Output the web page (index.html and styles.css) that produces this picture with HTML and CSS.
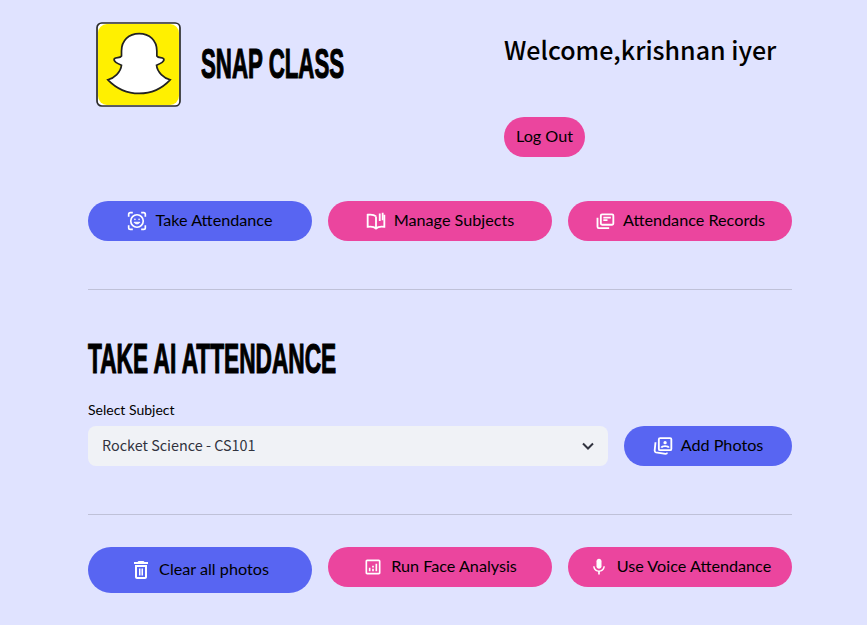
FILE: index.html
```html
<!DOCTYPE html>
<html>
  <head>
    <title>Snap Class</title>
    <link rel="stylesheet" href="styles.css">
  </head>
  <body>
    <div class="container">
      <!-- header -->
      <header class="header">
        <div class="brand">
          <svg class="logo" viewBox="0 0 250 250">
            <rect x="3" y="3" width="244" height="244" rx="14" fill="#fff" stroke="#2b2b2b" stroke-width="5"/>
            <rect x="6" y="6" width="238" height="238" rx="26" fill="#fff000"/>
            <path d="M127 34C158 34 179 55 179 85L179 100C184 108 194 102 199 108C203 116 190 122 178 127C180 148 200 165 218 170C190 200 160 210 127 210C94 210 64 200 35 170C53 165 73 148 75 127C63 122 50 116 54 108C60 102 70 108 75 100L75 85C75 55 96 34 127 34Z" fill="#fff" stroke="#222" stroke-width="5"/>
          </svg>
          <h1 class="brand-name">SNAP CLASS</h1>
        </div>
        <div class="account">
          <h2 class="welcome">Welcome,krishnan iyer</h2>
          <button class="btn pink logout"><span>Log Out</span></button>
        </div>
      </header>

      <!-- tabs -->
      <nav class="row tabs">
        <button class="btn blue">
          <svg class="icon" viewBox="0 0 24 24" fill="none" stroke="#fff" stroke-width="2">
            <path d="M2 7V4a2 2 0 0 1 2-2h3M17 2h3a2 2 0 0 1 2 2v3M22 17v3a2 2 0 0 1-2 2h-3M7 22H4a2 2 0 0 1-2-2v-3"/>
            <circle cx="12" cy="12" r="7.5"/>
            <path d="M8.5 13.5c1.5 2.6 5.500 2.600 7 0z" fill="#fff" stroke-width="1"/>
            <circle cx="9.500" cy="10" r="1" fill="#fff" stroke="none"/>
            <circle cx="14.500" cy="10" r="1" fill="#fff" stroke="none"/>
          </svg>
          <span>Take Attendance</span>
        </button>
        <button class="btn pink">
          <svg class="icon" viewBox="0 0 24 24" fill="none" stroke="#fff" stroke-width="2.200">
            <path d="M12 6.500C10 4.500 6 4 2 4.500V19c4-.5 8 0 10 2 2-2 6-2.500 10-2V4.500"/>
            <path d="M12 6.500V21"/>
            <path d="M16.500 3v9M20 2v9" />
          </svg>
          <span>Manage Subjects</span>
        </button>
        <button class="btn pink">
          <svg class="icon" viewBox="0 0 24 24" fill="none" stroke="#fff" stroke-width="2.200">
            <path d="M3 8v11c0 1 .5 1.500 1.500 1.500H17"/>
            <rect x="7" y="4" width="15" height="12.500" rx="1.500"/>
            <path d="M10 8h9M10 11h5"/>
          </svg>
          <span>Attendance Records</span>
        </button>
      </nav>

      <hr class="divider">

      <!-- attendance -->
      <section>
        <h2 class="section-title">TAKE AI ATTENDANCE</h2>
        <label class="field-label">Select Subject</label>
        <div class="subject-row">
          <div class="select">
            <span>Rocket Science - CS101</span>
            <svg class="chevron" viewBox="0 0 12 8" fill="none" stroke="#31333f" stroke-width="2">
              <path d="M1 1.500l5 5 5-5"/>
            </svg>
          </div>
          <button class="btn blue add-photos">
            <svg class="icon" viewBox="0 0 24 24" fill="none" stroke="#fff" stroke-width="2.200">
              <path d="M3 7.500L2 17.500c0 1 .5 2 1.500 2.200L15 21.500c1 0 1.800-.5 2-1.500"/>
              <rect x="7" y="2.500" width="15" height="14.500" rx="1.500"/>
              <circle cx="14.500" cy="8" r="2" fill="#fff" stroke="none"/>
              <path d="M10 14c1-2.500 8-2.500 9 0"/>
            </svg>
            <span>Add Photos</span>
          </button>
        </div>
      </section>

      <hr class="divider lower">

      <!-- actions -->
      <div class="row actions">
        <button class="btn blue tall">
          <svg class="icon" viewBox="3.500 2 17 20" fill="#fff">
            <path d="M6 19c0 1.100.9 2 2 2h8c1.100 0 2-.9 2-2V7H6v12zM8 9h8v10H8V9zm7.500-5l-1-1h-5l-1 1H5v2h14V4h-3.500z"/>
            <path d="M10 10.500h1.500v7H10zM12.500 10.500H14v7h-1.500z"/>
          </svg>
          <span>Clear all photos</span>
        </button>
        <button class="btn pink">
          <svg class="icon" viewBox="0 0 24 24" fill="#fff">
            <path d="M19 3H5c-1.100 0-2 .9-2 2v14c0 1.100.9 2 2 2h14c1.100 0 2-.9 2-2V5c0-1.100-.9-2-2-2zm0 16H5V5h14v14z"/>
            <path d="M7 13h2v4H7zM15 8h2v9h-2zM11 14h2v3h-2zM11 10.500h2v2h-2z"/>
          </svg>
          <span>Run Face Analysis</span>
        </button>
        <button class="btn pink">
          <svg class="icon" viewBox="0 0 24 24" fill="#fff">
            <path d="M12 14c1.660 0 3-1.340 3-3V5c0-1.660-1.340-3-3-3S9 3.340 9 5v6c0 1.660 1.340 3 3 3z"/>
            <path d="M17.300 11c0 3-2.540 5.100-5.300 5.100S6.700 14 6.700 11H5c0 3.410 2.720 6.230 6 6.720V21h2v-3.280c3.280-.48 6-3.300 6-6.720h-1.700z"/>
          </svg>
          <span>Use Voice Attendance</span>
        </button>
      </div>
    </div>
  </body>
</html>
```

FILE: styles.css
```css
html, body {
  margin: 0;
  height: 100%;
}
body {
  background-color: #e0e3ff;
  color: #000;
  font-family: Lato, sans-serif;
  overflow: hidden;
}

.container {
  width: 704px;
  margin-left: 88px;
  padding-top: 22px;
}

.header {
  display: flex;
  height: 179px;
}

.brand {
  width: 416px;
  padding-left: 8px;
  display: flex;
  align-items: flex-start;
  gap: 20px;
  box-sizing: border-box;
}

.logo {
  width: 85px;
  height: 85px;
}

.brand-name, .section-title {
  margin: 0;
  font-family: "Liberation Sans", sans-serif;
  font-weight: 700;
  white-space: nowrap;
  transform-origin: left center;
  -webkit-text-stroke: 1.2px #000;
}

.brand-name {
  margin-top: 22px;
  font-size: 42px;
  line-height: 40px;
  transform: scaleX(0.53);
}

.account {
  display: flex;
  flex-direction: column;
  align-items: flex-start;
}

.welcome {
  margin: 10px 0 0;
  font-family: "Noto Sans CJK SC", "Noto Sans", sans-serif;
  font-size: 25px;
  font-weight: 500;
  line-height: 34px;
}

.logout {
  width: 81px;
  margin-top: 51px;
}

.row {
  display: flex;
  gap: 16px;
}
.row > .btn {
  flex: 1;
}

.btn {
  height: 40px;
  padding: 0;
  border: none;
  border-radius: 20px;
  display: flex;
  align-items: center;
  justify-content: center;
  gap: 8px;
  color: #000;
  font-family: Lato, sans-serif;
  font-size: 16.2px;
}
.btn span {
  margin-bottom: 3px;
}
.blue {
  background-color: #5865f2;
}
.pink {
  background-color: #eb459e;
}
.tall {
  height: 46px;
  border-radius: 23px;
}

.icon {
  width: 20px;
  height: 20px;
  flex-shrink: 0;
}

.divider {
  margin: 48px 0 0;
  border: none;
  border-top: 1px solid #bfc1d8;
}
.divider.lower {
  margin-top: 48px;
}

.section-title {
  margin-top: 49px;
  font-size: 42px;
  line-height: 40px;
  transform: scaleX(0.54);
}

.field-label {
  display: block;
  margin-top: 21px;
  font-size: 14px;
  line-height: 20px;
}

.subject-row {
  display: flex;
  gap: 16px;
  margin-top: 6px;
}

.select {
  width: 520px;
  height: 40px;
  padding: 0 14px;
  box-sizing: border-box;
  border-radius: 8px;
  background-color: #f0f2f6;
  color: #31333f;
  font-family: "Noto Sans CJK SC", "Noto Sans", sans-serif;
  font-size: 14.4px;
  display: flex;
  align-items: center;
  justify-content: space-between;
}
.select span {
  margin-bottom: 3px;
}

.chevron {
  width: 12px;
  height: 8px;
}

.add-photos {
  width: 168px;
}

.actions {
  margin-top: 32px;
  align-items: flex-start;
}
```
